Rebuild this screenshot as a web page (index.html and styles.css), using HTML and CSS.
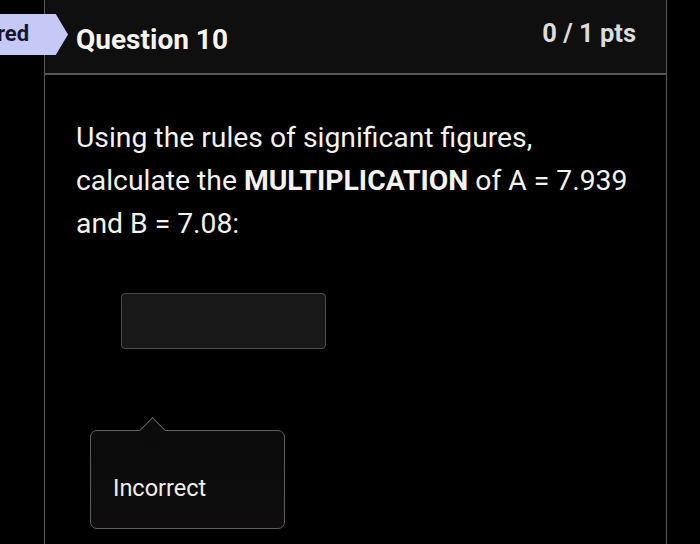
FILE: index.html
```html
<!DOCTYPE html>
<html>
<head>
<meta charset="utf-8">
<link rel="stylesheet" href="styles.css">
</head>
<body>
<div class="page">
  <div class="badge"><span>red</span></div>
  <div class="card">
    <div class="header">
      <div class="title">Question 10</div>
      <div class="pts">0 / 1 pts</div>
    </div>
    <div class="content">
      <p class="question">Using the rules of significant figures, calculate the <b>MULTIPLICATION</b> of A = 7.939 and B = 7.08:</p>
      <div class="answer"></div>
      <div class="tip">Incorrect</div>
    </div>
  </div>
</div>
</body>
</html>
```
FILE: styles.css
```css
html, body {
  margin: 0;
  padding: 0;
  background: #000;
  font-family: Roboto, "Liberation Sans", sans-serif;
  color: #f2f2ee;
}
.page {
  position: relative;
  width: 700px;
  height: 544px;
  overflow: hidden;
  padding-left: 44px;
  box-sizing: border-box;
}
.badge {
  position: absolute;
  left: 0;
  top: 14px;
  width: 68px;
  height: 41px;
  z-index: 2;
}
.badge::before {
  content: "";
  position: absolute;
  inset: 0;
  background: #c6c8f6;
  clip-path: polygon(0 0, 82% 0, 100% 50%, 82% 100%, 0 100%);
}
.badge span {
  position: relative;
  display: block;
  line-height: 41px;
  font-size: 22px;
  font-weight: 700;
  color: #151532;
  margin-left: -3px;
  margin-top: -1px;
}
.card {
  width: 623px;
  height: 544px;
  border-left: 1.5px solid #5a5a5a;
  border-right: 1.5px solid #5a5a5a;
  box-sizing: border-box;
}
.header {
  height: 75px;
  background: #0f0f0f;
  border-bottom: 2px solid #555;
  box-sizing: border-box;
  display: flex;
  justify-content: space-between;
  align-items: flex-start;
  padding: 0 30px 0 31px;
}
.title {
  font-size: 28px;
  font-weight: 700;
  margin-top: 23px;
  color: #f6f4ec;
}
.pts {
  font-size: 25.5px;
  font-weight: 700;
  color: #dcdcdc;
  margin-top: 18px;
}
.content {
  padding: 0 0 0 31px;
  position: relative;
}
.question {
  margin: 0;
  padding-top: 41px;
  font-size: 28.3px;
  line-height: 43px;
  width: 570px;
  color: #f4f2ec;
}
.question b {
  font-weight: 700;
}
.answer {
  margin: 48px 0 0 45px;
  width: 205px;
  height: 56px;
  box-sizing: border-box;
  background: #181818;
  border: 1.5px solid #4a4a4a;
  border-radius: 4px;
}
.tip {
  position: relative;
  margin: 81px 0 0 14px;
  width: 195px;
  height: 99px;
  box-sizing: border-box;
  border: 1.5px solid #5e5e5e;
  border-radius: 7px;
  background: linear-gradient(#0b0b0b, #0f0d0d);
  padding: 43px 0 0 22px;
  font-size: 23.5px;
  color: #eeeeea;
}
.tip::before {
  content: "";
  position: absolute;
  left: 52px;
  top: -10.5px;
  width: 18px;
  height: 18px;
  background: #0b0b0b;
  border-left: 1.5px solid #5e5e5e;
  border-top: 1.5px solid #5e5e5e;
  transform: rotate(45deg);
}
```
